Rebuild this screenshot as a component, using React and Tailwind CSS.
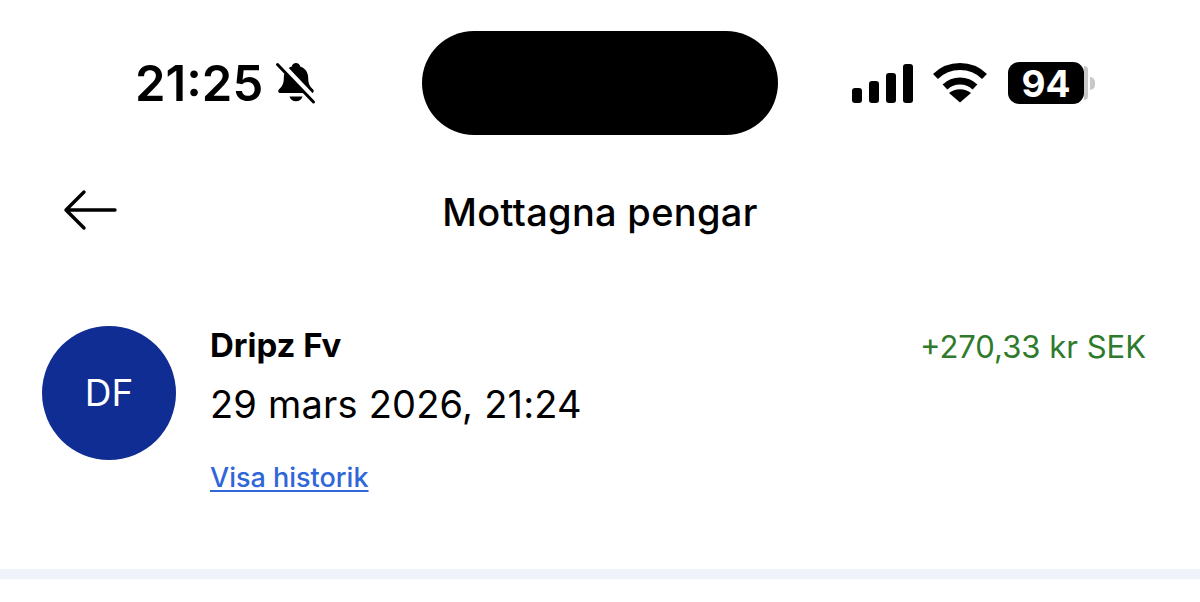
const INTER = { fontFamily: "Inter, 'Liberation Sans', sans-serif" };

function MutedBell() {
  return (
    <svg width="42" height="44" viewBox="0 0 42 44" className="block">
      <path d="M21 2c2.200 0 3.800 1.400 4.200 3.400 5.300 1.600 8 6 8 11.600 0 5.500 1.600 8.400 4.900 11.400 1.300 1.300.6 3.600-1.400 3.600H5.300c-2 0-2.700-2.300-1.400-3.600 3.300-3 4.900-5.900 4.900-11.400 0-5.600 2.700-10 8-11.600C17.200 3.400 18.800 2 21 2z" fill="#000" />
      <path d="M14.500 35.500h13c-.8 2.800-3.400 4.800-6.500 4.800s-5.700-2-6.500-4.800z" fill="#000" />
      <path d="M4 1l35 37" stroke="#fff" strokeWidth="6" />
      <path d="M2.500 3.500l36 37.500" stroke="#000" strokeWidth="3" strokeLinecap="round" />
    </svg>
  );
}

function SignalBars() {
  return (
    <div className="flex items-end gap-[7px] h-[39px]">
      {["h-[15px]", "h-[22px]", "h-[30px]", "h-[39px]"].map((h) => (
        <div key={h} className={`w-[10px] ${h} bg-black rounded-[3px]`} />
      ))}
    </div>
  );
}

function Wifi() {
  return (
    <svg width="54" height="40" viewBox="0 0 54 40" className="block">
      <path d="M2.500 13.500C9 7 17.500 3.500 27 3.500s18 3.500 24.500 10" fill="none" stroke="#000" strokeWidth="7" strokeLinejoin="round" />
      <path d="M12 24c4-3.800 9.300-6 15-6s11 2.200 15 6" fill="none" stroke="#000" strokeWidth="7" />
      <path d="M27 39.500l-11-9.500c3-2.500 6.800-3.800 11-3.800s8 1.300 11 3.800z" fill="#000" />
    </svg>
  );
}

function Battery() {
  return (
    <div className="flex items-center ml-[21px]">
      <div className="w-[76px] h-[42px] bg-black rounded-[11px] flex items-center justify-center text-white text-[37px] font-bold leading-none">
        94
      </div>
      <div className="w-[4px] h-[34px] bg-[#c8c8c8] rounded-r-[4px]" />
      <div className="w-[5px] h-[13px] ml-[2px] bg-[#c8c8c8] rounded-r-[5px]" />
    </div>
  );
}

export default function App() {
  return (
    <div className="w-[1200px] h-[602px] bg-white overflow-hidden text-black flex flex-col" style={INTER}>
      {/* status bar */}
      <div className="flex items-center pt-[31px] h-[135px] shrink-0">
        <div className="w-[422px] pl-[135px] flex items-center gap-[12px]">
          <span className="text-[49px] font-semibold leading-none">21:25</span>
          <MutedBell />
        </div>
        <div className="w-[356px] h-[104px] bg-black rounded-[52px]" />
        <div className="flex items-center pl-[74px]">
          <SignalBars />
          <div className="ml-[20px]">
            <Wifi />
          </div>
          <Battery />
        </div>
      </div>

      {/* nav */}
      <div className="relative flex items-center justify-center mt-[51px] h-[52px] shrink-0">
        <svg width="54" height="44" viewBox="0 0 54 44" className="absolute left-[63px] top-[2px]">
          <path d="M52 22H3M21 4L3 22l18 18" fill="none" stroke="#000" strokeWidth="3.400" strokeLinecap="round" strokeLinejoin="round" />
        </svg>
        <span className="text-[38px] font-medium leading-none tracking-[0.3px]">Mottagna pengar</span>
      </div>

      {/* transaction */}
      <div className="flex mt-[88px] pl-[42px] pr-[54px] shrink-0">
        <div className="w-[134px] h-[134px] rounded-full bg-[#0f2d92] flex items-center justify-center text-white text-[37px] shrink-0">
          DF
        </div>
        <div className="ml-[34px] flex-1 flex flex-col items-start">
          <span className="text-[33px] font-bold leading-none mt-[3px]">Dripz Fv</span>
          <span className="text-[38px] leading-none mt-[23px] tracking-[0.2px]">29 mars 2026, 21:24</span>
          <a className="text-[27px] font-medium leading-none mt-[41px] text-[#2f66d8] underline underline-offset-[3px]">Visa historik</a>
        </div>
        <span className="text-[31px] leading-none mt-[5px] text-[#2f7a2c]">+270,33 kr SEK</span>
      </div>

      {/* divider band */}
      <div className="h-[10px] mt-[78px] bg-[#eff2f8] shrink-0" />
    </div>
  );
}
